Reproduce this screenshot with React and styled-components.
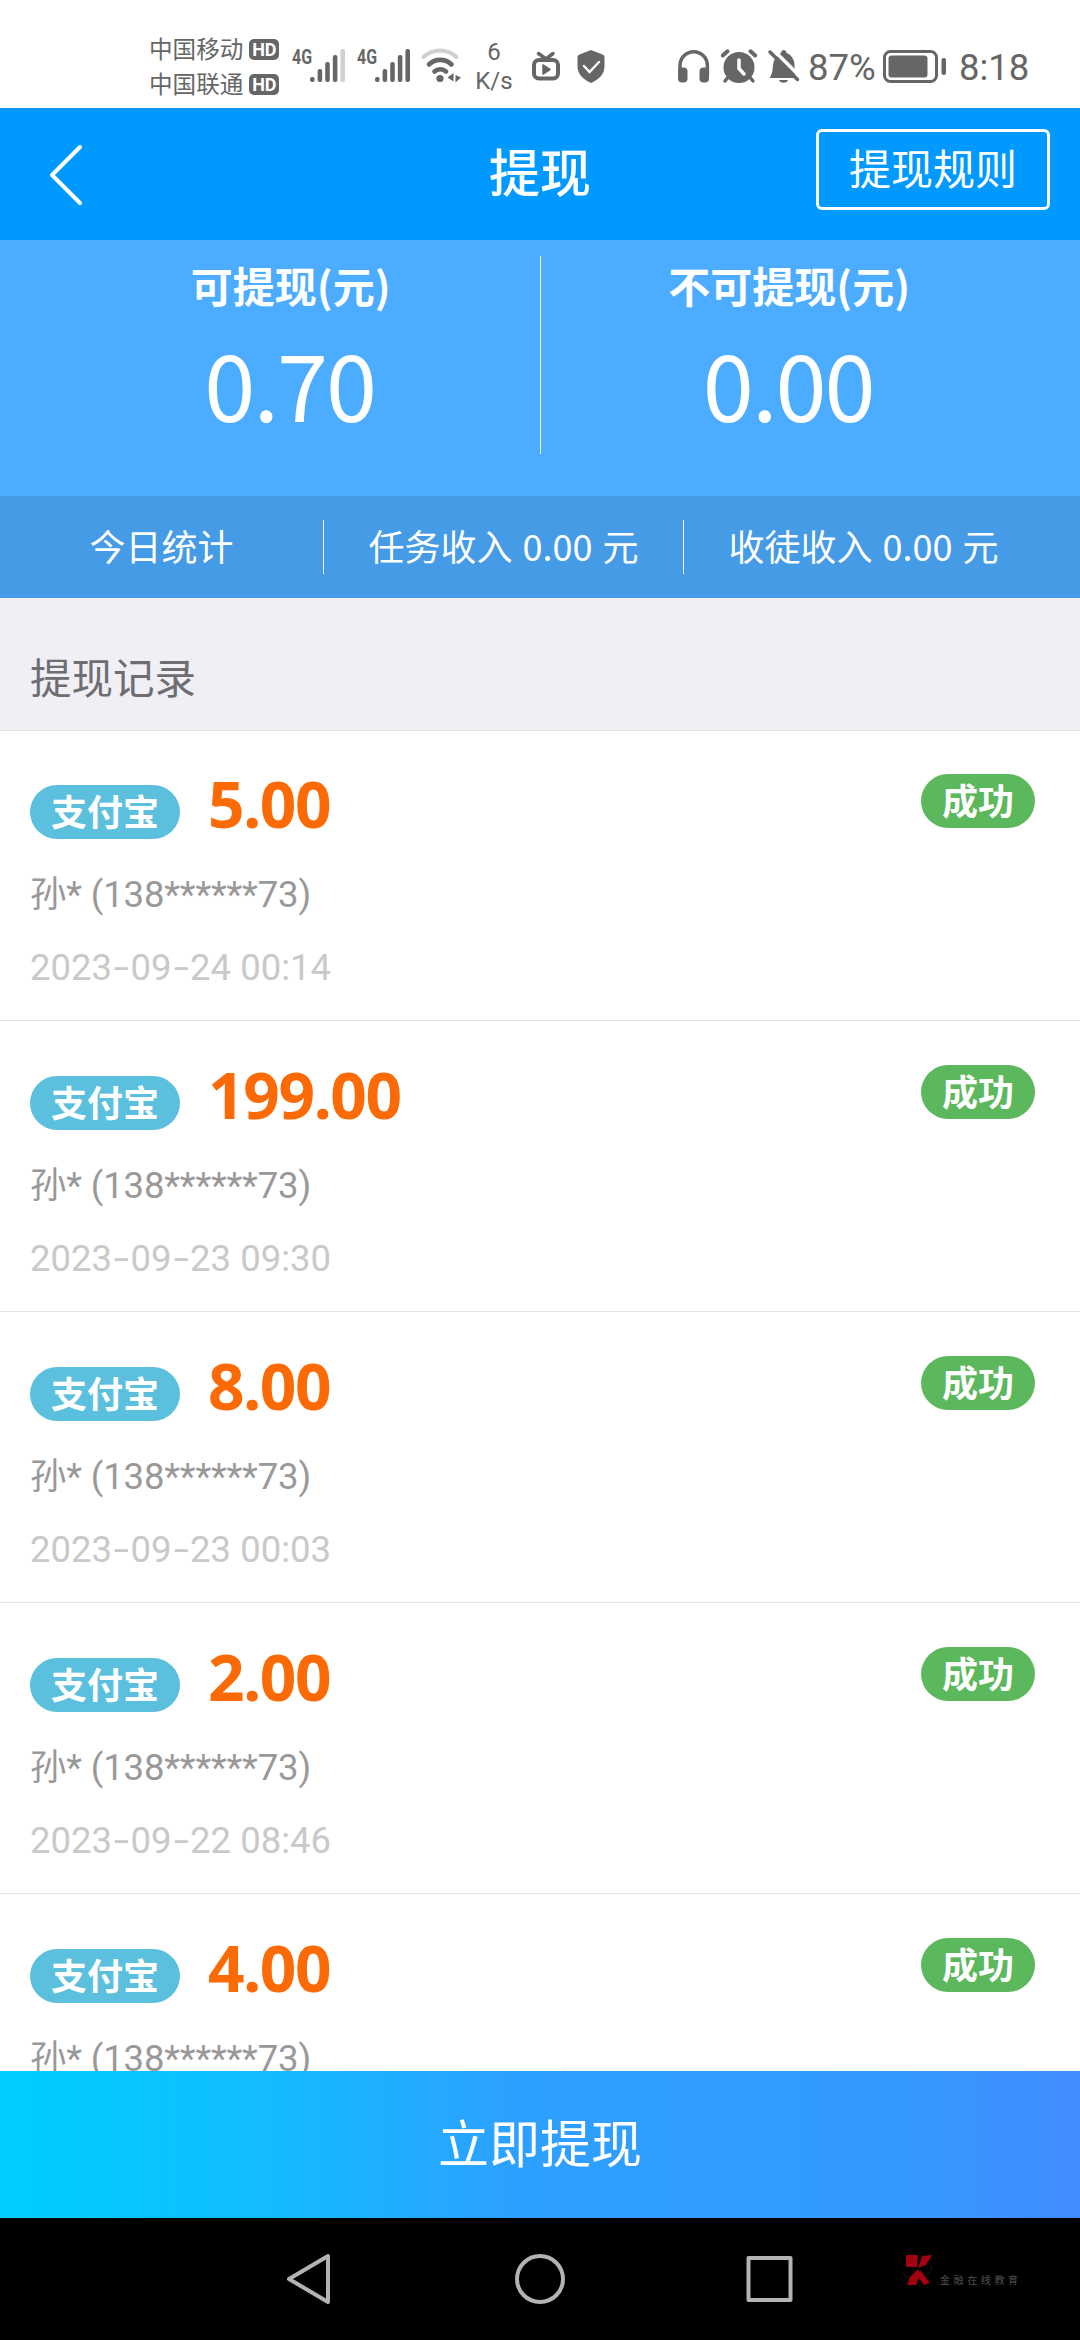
import React from "react";
import styled, { createGlobalStyle } from "styled-components";

const GlobalStyle = createGlobalStyle`
    * {
        box-sizing: border-box;
    }
    body {
        margin: 0;
        background: #fff;
        font-family: "Noto Sans CJK SC", sans-serif;
    }
`;

const Page = styled.div`
    display: flex;
    flex-direction: column;
    width: 1080px;
    height: 2340px;
    overflow: hidden;
    background: #fff;
`;

/* status bar */

const StatusBar = styled.div`
    display: flex;
    align-items: center;
    flex: none;
    height: 108px;
    padding: 26px 0 0 149px;
    color: #666;
    font-family: Roboto, "Noto Sans CJK SC", sans-serif;
`;

const Slot = styled.div`
    flex: none;
    width: ${(props) => props.$w}px;
    margin-left: ${(props) => props.$ml || 0}px;
    height: 82px;

    svg {
        display: block;
        overflow: visible;
    }
`;

const Carrier = styled.div`
    display: flex;
    align-items: center;
    height: 35px;
    font-family: "Noto Sans CJK SC", sans-serif;
    font-size: 23.6px;
    line-height: 35px;
    white-space: nowrap;
`;

const CarrierList = styled(Slot)`
    padding-top: 5px;
`;

const Hd = styled.span`
    width: 30px;
    height: 21px;
    margin: 1px 0 0 6px;
    border-radius: 5px;
    background: #666;
    color: #fff;
    font: bold 18px/21px Roboto, sans-serif;
    text-align: center;
`;

const Speed = styled(Slot)`
    padding-top: 12px;
    font-size: 24px;
    line-height: 29px;
    text-align: center;
`;

const StatusText = styled(Slot)`
    padding-top: 22px;
    font-size: 36.5px;
    line-height: 40px;
    white-space: nowrap;
`;

const NetType = styled.span`
    display: block;
    width: 26px;
    padding-top: 19px;
    font: bold 21px/24px Roboto, sans-serif;
    transform: scaleX(0.76);
    transform-origin: left;
`;

const Network = styled.div`
    display: flex;
`;

/* header */

const Header = styled.header`
    display: grid;
    grid-template-columns: 1fr auto 1fr;
    align-items: center;
    flex: none;
    height: 132px;
    padding: 0 30px;
    background: #0099ff;
    color: #fff;
    border-top: 1px solid #1093ea;
`;

const BackIcon = styled.svg`
    margin-left: 18px;
`;

const Title = styled.h1`
    margin: -9px 0 0;
    font-size: 51px;
    font-weight: 500;
    line-height: 60px;
`;

const RuleButton = styled.button`
    justify-self: end;
    width: 234px;
    height: 81px;
    margin-top: -10px;
    padding: 0 0 6px;
    border: 3px solid #fff;
    border-radius: 6px;
    background: none;
    color: #fff;
    font-family: inherit;
    font-size: 42px;
    line-height: 60px;
`;

/* balance */

const Balance = styled.section`
    display: flex;
    flex: none;
    height: 256px;
    padding: 16px 42px 0;
    background: #4cacff;
    color: #fff;
`;

const BalanceItem = styled.div`
    flex: 1;
    height: 198px;
    text-align: center;

    & + & {
        border-left: 1px solid #fff;
    }
`;

const BalanceLabel = styled.div`
    font-size: 42px;
    font-weight: 700;
    line-height: 58px;
`;

const BalanceValue = styled.div`
    margin-top: 8px;
    font-size: 92px;
    line-height: 120px;
    letter-spacing: -2px;
    text-indent: -2px;
`;

const Stats = styled.section`
    display: grid;
    grid-template-columns: 323px 360px 360px;
    align-items: center;
    flex: none;
    height: 102px;
    background: #459be5;
    color: #fff;
`;

const Stat = styled.div`
    height: 54px;
    font-size: 36px;
    line-height: 50px;
    text-align: center;
    word-spacing: 2px;
    white-space: nowrap;

    & + & {
        border-left: 1px solid #fff;
    }
`;

/* records */

const SectionTitle = styled.h2`
    flex: none;
    height: 133px;
    margin: 0;
    padding: 47px 30px 0;
    border-bottom: 1px solid #dedee2;
    background: #efeff4;
    color: #6d6d72;
    font-size: 41.5px;
    font-weight: 400;
    line-height: 62px;
`;

const Records = styled.div`
    flex: 1;
    min-height: 0;
    overflow: hidden;
    margin-top: -1px;
`;

const Record = styled.div`
    display: flex;
    justify-content: space-between;
    align-items: flex-start;
    height: 291px;
    padding: 44px 45px 0 30px;
    border-bottom: 1px solid #e3e3e5;
`;

const Main = styled.div`
    display: flex;
    flex-direction: column;
`;

const Top = styled.div`
    display: flex;
    height: 66px;
`;

const Pill = styled.span`
    height: 54px;
    padding: 0 21px;
    border-radius: 27px;
    background: ${(props) => props.$color};
    color: #fff;
    font-size: 36px;
    font-weight: 700;
    line-height: 51px;
`;

const Method = styled(Pill)`
    margin-top: 11px;
`;

const Amount = styled.span`
    margin-left: 28px;
    color: #fb6a05;
    font-family: "Noto Sans", sans-serif;
    font-size: 64px;
    font-weight: 700;
    line-height: 60px;
    letter-spacing: -1.4px;
`;

const Account = styled.div`
    margin-top: 33px;
    color: #999;
    font-family: Roboto, "Noto Sans CJK SC", sans-serif;
    font-size: 36.5px;
    line-height: 44px;
    letter-spacing: -0.15px;
    white-space: nowrap;
`;

const Time = styled.div`
    margin-top: 29px;
    color: #c9c9c9;
    font-family: Roboto, sans-serif;
    font-size: 36.5px;
    line-height: 44px;
    white-space: nowrap;
`;

const Dash = styled.span`
    display: inline-block;
    width: 18.5px;
    text-align: center;
    transform: scaleX(1.5);
`;

/* bottom */

const Submit = styled.button`
    flex: none;
    height: 147px;
    padding: 0 0 7px;
    border: 0;
    background: linear-gradient(90deg, #00ccff 3%, #10bfff 22%, #2da0ff 48%, #3499ff 84%, #428cff 100%);
    color: #fff;
    font-family: inherit;
    font-size: 51px;
    line-height: 70px;
`;

const NavBar = styled.nav`
    position: relative;
    display: flex;
    justify-content: center;
    align-items: center;
    gap: 180px;
    flex: none;
    height: 122px;
    background: #000;

    > svg {
        flex: none;
    }
`;

const Watermark = styled.div`
    position: absolute;
    left: 903px;
    top: 37px;
    display: flex;
    align-items: flex-end;
    color: #444;
    font-size: 10px;
    font-weight: 500;
    line-height: 12px;
    letter-spacing: 3.6px;
    white-space: nowrap;

    svg {
        margin-right: 7px;
    }
`;

const records = [
    { amount: "5.00", time: "2023-09-24 00:14" },
    { amount: "199.00", time: "2023-09-23 09:30" },
    { amount: "8.00", time: "2023-09-23 00:03" },
    { amount: "2.00", time: "2023-09-22 08:46" },
    { amount: "4.00" },
];

function Signal({ weak }) {
    const tops = [51, 43, 36, 29, 23];
    return (
        <Network>
            <NetType>4G</NetType>
            <svg width="36" height="82" viewBox="8 0 36 82">
                {tops.map((y, i) => (
                    <rect
                        key={y}
                        x={i * 7.6}
                        y={y}
                        width="4.6"
                        height={56 - y}
                        rx="2"
                        fill={weak && i === 4 ? "#d0d0d0" : "#666"}
                    />
                ))}
            </svg>
        </Network>
    );
}

function StatusIcons() {
    return (
        <StatusBar>
            <CarrierList $w={131}>
                <Carrier>中国移动<Hd>HD</Hd></Carrier>
                <Carrier>中国联通<Hd>HD</Hd></Carrier>
            </CarrierList>
            <Slot $w={53} $ml={12}><Signal weak /></Slot>
            <Slot $w={53} $ml={12}><Signal /></Slot>
            <Slot $w={40} $ml={11}>
                <svg width="40" height="82" fill="none" stroke="#666" strokeWidth="4.6" strokeLinecap="round">
                    <path d="M2.5 31a24 24 0 0 1 33 0" stroke="#d0d0d0" strokeWidth="4" />
                    <path d="M8 38.5a16 16 0 0 1 22.5 0" />
                    <path d="M13.5 45.5a8.500 8.500 0 0 1 11.500 0" />
                    <circle cx="19" cy="52.5" r="3.6" fill="#666" stroke="none" />
                    <path d="M32.5 47v8.500l-6-4zM34.500 56.500V49l5.500 2.500z" fill="#666" stroke="none" />
                </svg>
            </Slot>
            <Speed $w={44} $ml={11}>
                <div>6</div>
                <div>K/s</div>
            </Speed>
            <Slot $w={28} $ml={16}>
                <svg width="28" height="82" fill="none" stroke="#666" strokeLinecap="round" strokeLinejoin="round">
                    <rect x="2" y="34" width="24" height="18.5" rx="5" strokeWidth="4" />
                    <path d="M6.5 27.5l7.500 5.500 7-5.500" strokeWidth="3.5" />
                    <path d="M11 39v9l7-4.500z" fill="#666" strokeWidth="1.5" />
                </svg>
            </Slot>
            <Slot $w={28} $ml={17}>
                <svg width="28" height="82">
                    <path d="M14 24l11.500 4.500c1.200.5 2 1.500 2 2.800V40c0 8-5 13-13.500 17C5.500 53 .5 48 .5 40v-8.700c0-1.300.8-2.300 2-2.800z" fill="#666" />
                    <path d="M7 40l5.500 6L22 36" fill="none" stroke="#fff" strokeWidth="2.4" strokeLinecap="round" />
                </svg>
            </Slot>
            <Slot $w={32} $ml={73}>
                <svg width="32" height="82">
                    <path d="M2 48v-8.500a13.700 13.700 0 0 1 27.400 0V48" fill="none" stroke="#666" strokeWidth="3.5" />
                    <rect x="0" y="41.5" width="9.5" height="15" rx="4" fill="#666" />
                    <rect x="21.5" y="41.5" width="9.5" height="15" rx="4" fill="#666" />
                </svg>
            </Slot>
            <Slot $w={36} $ml={11}>
                <svg width="36" height="82" stroke="#666" fill="none" strokeLinecap="round">
                    <circle cx="18" cy="41.5" r="15.5" fill="#666" stroke="none" />
                    <path d="M1.8 29.5L6.500 25.300M34.200 29.500L29.500 25.300" strokeWidth="4" />
                    <path d="M6.5 52L4 55M29.500 52l2.500 3" strokeWidth="3.5" />
                    <path d="M18 34v8.500l5 5.500" stroke="#fff" strokeWidth="3.5" strokeLinejoin="round" />
                </svg>
            </Slot>
            <Slot $w={32} $ml={11}>
                <svg width="32" height="82">
                    <path d="M1.5 52C5 47 4.500 43 5 39c1-7 5-11 8-12 .5-4 5-4 5.500 0 5 1.500 8 7 8 12 0 5 0 9 2 13z" fill="#666" />
                    <path d="M11 54h9c-1 3.500-8 3.500-9 0z" fill="#666" />
                    <path d="M5.5 24l27 27" stroke="#fff" strokeWidth="3.5" />
                    <path d="M2 26l27.500 27.500" stroke="#666" strokeWidth="3.5" strokeLinecap="round" />
                </svg>
            </Slot>
            <StatusText $w={68} $ml={8}>87%</StatusText>
            <Slot $w={64} $ml={7}>
                <svg width="64" height="82">
                    <rect x="1.5" y="25.5" width="52" height="30" rx="6" fill="none" stroke="#666" strokeWidth="3" />
                    <rect x="5.5" y="29.5" width="39" height="22" rx="3" fill="#666" />
                    <rect x="58.5" y="32" width="4.5" height="17" rx="2" fill="#666" />
                </svg>
            </Slot>
            <StatusText $w={72} $ml={12}>8:18</StatusText>
        </StatusBar>
    );
}

function RecordTime({ value }) {
    const [year, month, rest] = value.split("-");
    return (
        <Time>
            {year}<Dash>-</Dash>{month}<Dash>-</Dash>{rest}
        </Time>
    );
}

function RecordItem(props) {
    const { amount, time } = props;

    return (
        <Record>
            <Main>
                <Top>
                    <Method $color="#5bc0de">支付宝</Method>
                    <Amount>{amount}</Amount>
                </Top>
                <Account>孙* (138******73)</Account>
                {time && <RecordTime value={time} />}
            </Main>
            <Pill $color="#5cb85c">成功</Pill>
        </Record>
    );
}

function App() {
    return (
        <Page>
            <GlobalStyle />
            <StatusIcons />
            <Header>
                <BackIcon width="36" height="62" fill="none" stroke="#fff" strokeWidth="4" strokeLinecap="round" strokeLinejoin="round">
                    <path d="M32 3L4 31l28 28" />
                </BackIcon>
                <Title>提现</Title>
                <RuleButton>提现规则</RuleButton>
            </Header>
            <Balance>
                <BalanceItem>
                    <BalanceLabel>可提现(元)</BalanceLabel>
                    <BalanceValue>0.70</BalanceValue>
                </BalanceItem>
                <BalanceItem>
                    <BalanceLabel>不可提现(元)</BalanceLabel>
                    <BalanceValue>0.00</BalanceValue>
                </BalanceItem>
            </Balance>
            <Stats>
                <Stat>今日统计</Stat>
                <Stat>任务收入 0.00 元</Stat>
                <Stat>收徒收入 0.00 元</Stat>
            </Stats>
            <SectionTitle>提现记录</SectionTitle>
            <Records>
                {records.map((item) => (
                    <RecordItem key={item.amount} {...item} />
                ))}
            </Records>
            <Submit>立即提现</Submit>
            <NavBar>
                <svg width="50" height="54" fill="none" stroke="#b3b3b3" strokeWidth="4" strokeLinejoin="round">
                    <path d="M43 4v46L4 27z" />
                </svg>
                <svg width="50" height="54" fill="none" stroke="#b3b3b3" strokeWidth="4">
                    <circle cx="25" cy="27" r="23" />
                </svg>
                <svg width="50" height="54" fill="none" stroke="#b3b3b3" strokeWidth="4" strokeLinejoin="round">
                    <rect x="3.5" y="6" width="42" height="42" />
                </svg>
                <Watermark>
                    <svg width="30" height="31">
                        <path d="M3 0h12l-1 12H3zM19 1l10-1-6 10-8 3zM4 30l3-8 8-8 2 6-4 10zM17 15l10 13-6 2-6-8z" fill="#a30010" />
                        <path d="M0 12q-2 8 5 11M28 10q2 6-4 9" fill="none" stroke="#2b1416" />
                    </svg>
                    金融在线教育
                </Watermark>
            </NavBar>
        </Page>
    );
}

export default App;
